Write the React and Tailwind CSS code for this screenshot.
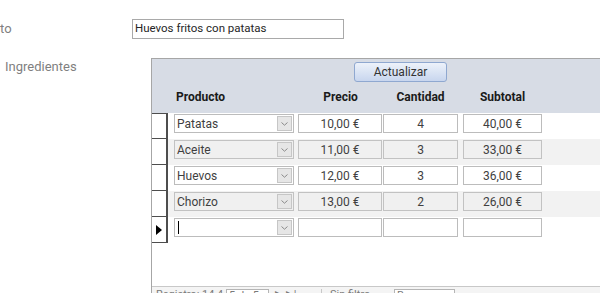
import React from 'react';

const rows = [
  { producto: 'Patatas', precio: '10,00 €', cantidad: '4', subtotal: '40,00 €' },
  { producto: 'Aceite', precio: '11,00 €', cantidad: '3', subtotal: '33,00 €' },
  { producto: 'Huevos', precio: '12,00 €', cantidad: '3', subtotal: '36,00 €' },
  { producto: 'Chorizo', precio: '13,00 €', cantidad: '2', subtotal: '26,00 €' },
];

function Chevron() {
  return (
    <svg width="7" height="4" viewBox="0 0 7 4" className="block">
      <path d="M0.5 0.5 L3.5 3.2 L6.5 0.5" fill="none" stroke="#8a8a8a" strokeWidth="1" />
    </svg>
  );
}

function Combo({ value, alt, current }) {
  return (
    <div
      className={`w-[120px] h-[19px] border flex items-stretch ${
        alt ? 'bg-[#f0f0f0] border-[#c2c2c2]' : 'bg-white border-[#bcbcbc]'
      }`}
    >
      <div className="flex-1 flex items-center pl-[2px] text-[#3f3f3f] leading-none">
        {current ? <span className="block w-px h-[13px] bg-black ml-[1px]" /> : value}
      </div>
      <div className="w-[15px] m-px border border-[#c6c6c6] bg-[#e6e6e6] flex items-center justify-center">
        <Chevron />
      </div>
    </div>
  );
}

function Cell({ value, width, alt }) {
  return (
    <div
      className={`${width} h-[19px] border flex items-center justify-center text-[#3f3f3f] leading-none ${
        alt ? 'bg-[#f0f0f0] border-[#c2c2c2]' : 'bg-white border-[#bcbcbc]'
      }`}
    >
      {value}
    </div>
  );
}

function Row({ row, index, current }) {
  const alt = index % 2 === 1;
  return (
    <div className={`flex h-[26px] ${alt ? 'bg-[#f2f2f2]' : 'bg-white'}`}>
      <div
        className={`w-[16px] shrink-0 border-r-2 border-b border-[#4d4d4d] bg-white flex items-center justify-center ${
          index === 0 ? 'border-t' : ''
        }`}
      >
        {current && (
          <svg width="6" height="10" viewBox="0 0 6 10">
            <path d="M0 0 L6 5 L0 10 Z" fill="#000" />
          </svg>
        )}
      </div>
      <div className="flex pl-[6px] pt-px gap-[4px]">
        <Combo value={row.producto} alt={alt} current={current} />
        <div className="flex gap-[1px]">
          <Cell value={row.precio} width="w-[84px]" alt={alt} />
          <Cell value={row.cantidad} width="w-[75px]" alt={alt} />
        </div>
        <div className="ml-px">
          <Cell value={row.subtotal} width="w-[79px]" alt={alt} />
        </div>
      </div>
    </div>
  );
}

export default function App() {
  const newRow = { producto: '', precio: '', cantidad: '', subtotal: '' };

  return (
    <div className="w-[600px] h-[293px] overflow-hidden bg-white font-['Roboto',sans-serif] text-[12px]">
      {/* Nombre del plato */}
      <div className="flex items-center pt-[19px]">
        <div className="w-[132px] shrink-0 text-[#7f7f7f] text-[13px]">to</div>
        <div className="w-[212px] h-[20px] border border-[#a9a9a9] flex items-center pl-[2px] text-[#262626] text-[11.5px]">
          Huevos fritos con patatas
        </div>
      </div>

      {/* Ingredientes */}
      <div className="flex mt-[19px]">
        <div className="w-[151px] shrink-0 pl-[5px] pt-px text-[#7f7f7f] text-[13px] leading-[16px]">Ingredientes</div>
        <div className="w-[470px] shrink-0 h-[240px] border-l border-t border-[#a6a6a6] flex flex-col">
          {/* Header */}
          <div className="h-[54px] bg-[#d7dce5] flex flex-col">
            <div className="pt-[3px] flex">
              <button className="ml-[202px] w-[93px] h-[20px] rounded-[3px] border border-[#8fa8d0] bg-gradient-to-b from-[#edf2fa] to-[#c8d6ee] text-[#333] text-[12px] leading-none">
                Actualizar
              </button>
            </div>
            <div className="flex mt-[9px] pl-[22px] font-bold text-[#1a1a1a] leading-none">
              <div className="w-[124px] pl-[2px]">Producto</div>
              <div className="w-[85px] text-center">Precio</div>
              <div className="w-[75px] text-center">Cantidad</div>
              <div className="w-[84px] text-center pl-[5px]">Subtotal</div>
            </div>
          </div>

          {/* Detail rows */}
          {rows.map((row, i) => (
            <Row key={row.producto} row={row} index={i} />
          ))}
          <Row row={newRow} index={4} current />

          <div className="flex-1" />

          {/* Navigation bar */}
          <div className="h-[12px] border-t border-[#c8c8c8] bg-[#f4f4f4] flex items-start text-[#7a7a7a] text-[11px] leading-[12px] pt-[2px] overflow-hidden">
            <span className="pl-[4px] w-[74px]">Registro: 14 4</span>
            <span className="w-[43px] h-[12px] bg-white border border-[#b5b5b5] pl-[2px]">5 de 5</span>
            <span className="w-[52px] pl-[6px]">▶ ▶|</span>
            <span className="w-[67px] border-l border-[#c8c8c8] pl-[8px]">Sin filtro</span>
            <span className="w-[61px] ml-[6px] h-[12px] bg-white border border-[#b5b5b5] pl-[2px]">Buscar</span>
          </div>
        </div>
      </div>
    </div>
  );
}
